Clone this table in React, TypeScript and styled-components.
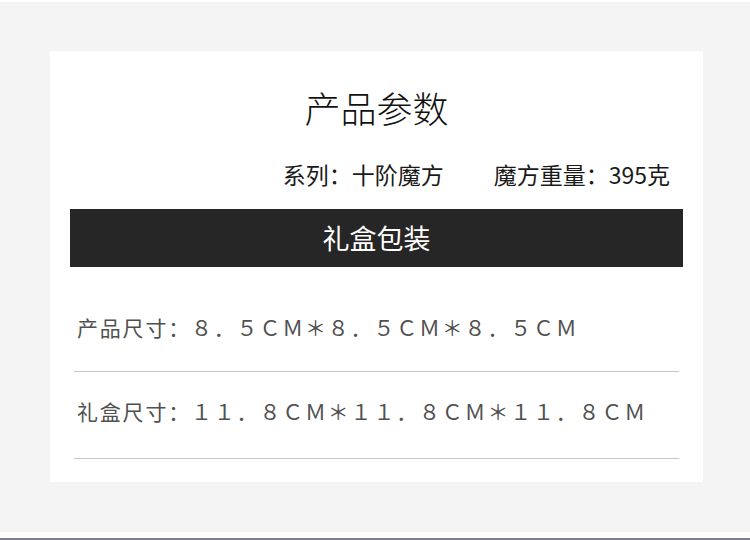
import React from 'react';
import styled, { createGlobalStyle } from 'styled-components';

const GlobalStyle = createGlobalStyle`
  html, body {
    margin: 0;
    padding: 0;
    background: #f4f4f4;
  }
  body {
    font-family: "Noto Sans CJK SC", "Noto Sans", sans-serif;
  }
`;

type SizeRow = { label: string; value: string; pad: number; height: number };

const sizes: SizeRow[] = [
  { label: '产品尺寸：', value: '８．５ＣＭ＊８．５ＣＭ＊８．５ＣＭ', pad: 45, height: 105 },
  { label: '礼盒尺寸：', value: '１１．８ＣＭ＊１１．８ＣＭ＊１１．８ＣＭ', pad: 24, height: 87 },
];

const App: React.FC = () => {
  return (
    <Page>
      <GlobalStyle />
      <TopEdge />
      <Card>
        <Title>产品参数</Title>
        <SpecLine>
          <Spec>系列：十阶魔方</Spec>
          <Spec>魔方重量：395克</Spec>
        </SpecLine>
        <Banner>礼盒包装</Banner>
        {sizes.map((s) => (
          <SizeItem key={s.label} $pad={s.pad} $height={s.height}>
            {s.label}
            {s.value}
          </SizeItem>
        ))}
      </Card>
      <PhotoEdge />
    </Page>
  );
};

const Page = styled.div`
  width: 750px;
  height: 540px;
  overflow: hidden;
  background: #f4f4f4;
`;

const TopEdge = styled.div`
  height: 2px;
  background: #ffffff;
`;

const Card = styled.div`
  margin: 49px 0 0 50px;
  width: 653px;
  height: 431px;
  box-sizing: border-box;
  padding: 31px 20px 0;
  background: #ffffff;
`;

const Title = styled.h1`
  margin: 0;
  height: 50px;
  line-height: 50px;
  text-align: center;
  font-size: 36px;
  font-weight: 300;
  color: #111111;
`;

const SpecLine = styled.div`
  display: flex;
  justify-content: flex-end;
  gap: 50px;
  margin-top: 27px;
  padding-right: 13px;
  height: 30px;
`;

const Spec = styled.span`
  font-size: 23px;
  line-height: 30px;
  color: #1a1a1a;
`;

const Banner = styled.div`
  margin-top: 20px;
  height: 58px;
  line-height: 58px;
  background: #262626;
  color: #ffffff;
  text-align: center;
  font-size: 27px;
`;

const SizeItem = styled.div<{ $pad: number; $height: number }>`
  margin: 0 4px;
  height: ${(p) => p.$height}px;
  box-sizing: border-box;
  padding: ${(p) => p.$pad}px 0 0 3px;
  border-bottom: 1px solid #c6c6c6;
  font-size: 21px;
  line-height: 30px;
  letter-spacing: 1.8px;
  color: #505050;
  white-space: nowrap;
`;

const PhotoEdge = styled.div`
  margin-top: 50px;
  height: 6px;
  background: #fdfdf9;
  border-bottom: 2px solid #7a8090;
`;

export default App;
